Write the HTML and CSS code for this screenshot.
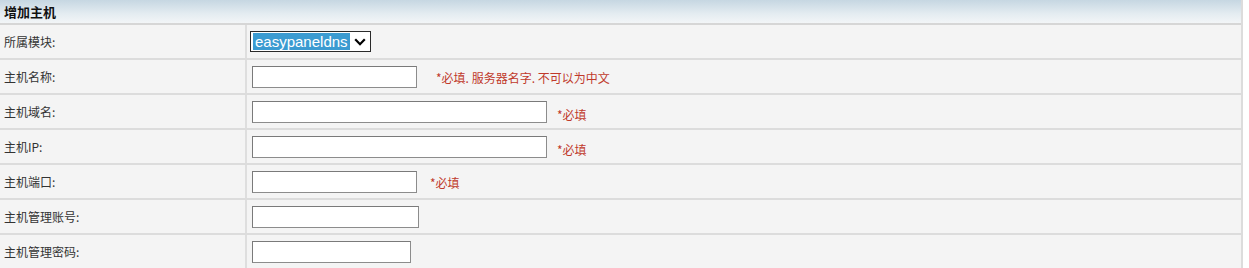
FILE: index.html
```html
<!DOCTYPE html>
<html lang="zh-CN">
<head>
<meta charset="utf-8">
<title>增加主机</title>
<link rel="stylesheet" href="styles.css">
</head>
<body>
<div class="panel">
  <div class="panel-head">增加主机</div>
  <div class="form">
    <div class="row">
      <div class="label">所属模块:</div>
      <div class="value">
        <div class="select-box">
          <span class="select-text">easypaneldns</span>
          <svg class="chev" width="12" height="8" viewBox="0 0 12 8"><path d="M1.2 1.2 L6 6.2 L10.8 1.2" fill="none" stroke="#000" stroke-width="2.2"/></svg>
        </div>
      </div>
    </div>
    <div class="row">
      <div class="label">主机名称:</div>
      <div class="value"><input class="inp w-s" type="text"><span class="req">*必填. 服务器名字. 不可以为中文</span></div>
    </div>
    <div class="row">
      <div class="label">主机域名:</div>
      <div class="value"><input class="inp w-l" type="text"><span class="req req-l">*必填</span></div>
    </div>
    <div class="row">
      <div class="label">主机IP:</div>
      <div class="value"><input class="inp w-l" type="text"><span class="req req-l">*必填</span></div>
    </div>
    <div class="row">
      <div class="label">主机端口:</div>
      <div class="value"><input class="inp w-s" type="text"><span class="req req-p">*必填</span></div>
    </div>
    <div class="row">
      <div class="label">主机管理账号:</div>
      <div class="value"><input class="inp w-m" type="text"></div>
    </div>
    <div class="row">
      <div class="label">主机管理密码:</div>
      <div class="value"><input class="inp w-xs" type="password"></div>
    </div>
  </div>
</div>
</body>
</html>
```
FILE: styles.css
```css
html, body {
  margin: 0;
  padding: 0;
  background: #ffffff;
}
body {
  font-family: "Noto Sans CJK SC", "DejaVu Sans", sans-serif;
  font-size: 12px;
  color: #333333;
  overflow: hidden;
}
.panel {
  width: 1241px;
  border-right: 2px solid #dcdcdc;
}
.panel-head {
  height: 23px;
  line-height: 23px;
  padding-left: 4px;
  font-size: 13px;
  font-weight: bold;
  color: #111111;
  background: linear-gradient(to bottom, #c6d7e2 0%, #e4ecf1 60%, #f2f5f7 100%);
  border-bottom: 2px solid #d6d6d6;
}
.form {
  display: flex;
  flex-direction: column;
  background: #f4f4f4;
}
.row {
  display: grid;
  grid-template-columns: 247px 1fr;
  height: 33px;
  border-bottom: 2px solid #dcdcdc;
}
.label {
  display: flex;
  align-items: center;
  padding-left: 4px;
  border-right: 2px solid #dedede;
  color: #333333;
}
.value {
  display: flex;
  align-items: center;
  padding-left: 5px;
}
.inp {
  box-sizing: border-box;
  height: 22px;
  margin: 0;
  padding: 0 3px;
  border: 1px solid #8c8c8c;
  border-top-color: #7a7a7a;
  border-left-color: #7a7a7a;
  background: #ffffff;
  font-family: "Liberation Sans", sans-serif;
  font-size: 13px;
  outline: none;
}
.w-s { width: 165px; }
.w-l { width: 295px; }
.w-m { width: 167px; }
.w-xs { width: 159px; }
.req {
  color: #c0392b;
  font-size: 12px;
  margin-left: 19px;
  padding-top: 2px;
}
.req-l { margin-left: 10px; padding-top: 6px; }
.req-p { margin-left: 13px; padding-top: 2px; }
.select-box {
  box-sizing: border-box;
  width: 121px;
  height: 21px;
  margin-left: -2px;
  border: 1px solid #2a2a2a;
  background: #ffffff;
  display: flex;
  align-items: center;
  padding-left: 2px;
  gap: 4px;
}
.select-text {
  background: #3b9bd1;
  color: #ffffff;
  font-family: "Liberation Sans", Arial, sans-serif;
  font-size: 15px;
  line-height: 17px;
  padding: 0 2px;
}
.chev {
  display: block;
}
```
